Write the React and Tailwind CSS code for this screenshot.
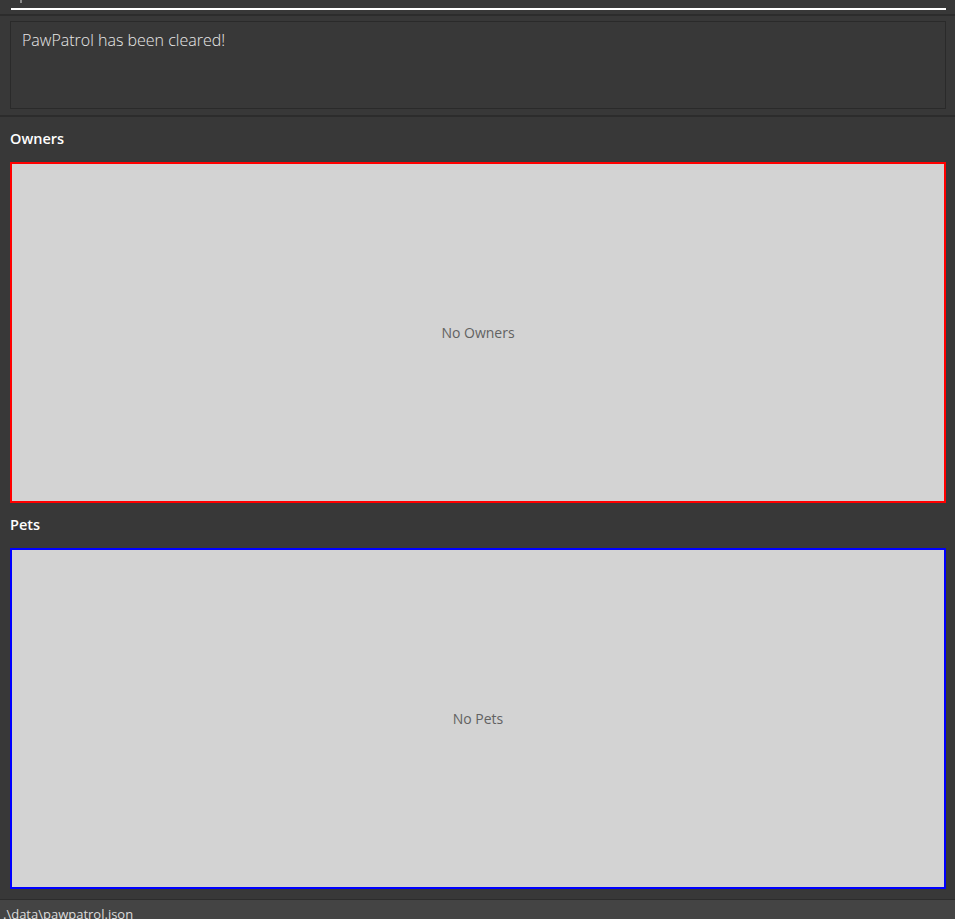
import React from 'react';

const font = { fontFamily: '"Open Sans", "Noto Sans", sans-serif' };

const ListPanel = ({ title, empty, borderClass }) => (
  <div className="pt-[12px] shrink-0">
    <div className="h-[20px] leading-[20px] text-[14.5px] font-semibold text-white">{title}</div>
    <div className={`mt-[13px] h-[341px] border-2 ${borderClass} bg-[#d3d3d3] flex items-center justify-center`}>
      <span className="text-[14px] font-medium text-[#626262]">{empty}</span>
    </div>
  </div>
);

export default function App() {
  return (
    <div className="w-[955px] h-[919px] bg-[#383838] flex flex-col overflow-hidden" style={font}>
      {/* command box, scrolled up */}
      <div className="relative h-[14px] shrink-0 pl-[11px] pr-[9px]">
        <div className="absolute left-[20px] top-0 w-[2px] h-[3px] bg-[#8a8a8a]"></div>
        <div className="pt-[8px]">
          <div className="h-[1.5px] bg-white"></div>
        </div>
      </div>
      <div className="h-[2px] shrink-0 bg-[#2c2c2c]"></div>

      {/* result display */}
      <div className="shrink-0 pt-[5px] pb-[6px] pl-[10px] pr-[9px]">
        <div className="h-[88px] border border-[#2a2a2a] bg-[#383838] px-[11px] pt-[6px]">
          <p className="text-[16px] font-light text-[#e8e8e8] leading-[24px]">PawPatrol has been cleared!</p>
        </div>
      </div>
      <div className="h-[2px] shrink-0 bg-[#2c2c2c]"></div>

      {/* lists */}
      <div className="shrink-0 pl-[10px] pr-[9px]">
        <ListPanel title="Owners" empty="No Owners" borderClass="border-[#ff0000]" />
        <ListPanel title="Pets" empty="No Pets" borderClass="border-[#0000ff]" />
      </div>

      <div className="shrink-0 mt-[10px] h-[1px] bg-[#2c2c2c]"></div>
      <div className="shrink-0 h-[20px] overflow-hidden bg-[#444444] pl-[3px] pt-[4px]">
        <span className="text-[13px] text-[#dcdcdc] leading-[20px] block whitespace-nowrap">.\data\pawpatrol.json</span>
      </div>
    </div>
  );
}
